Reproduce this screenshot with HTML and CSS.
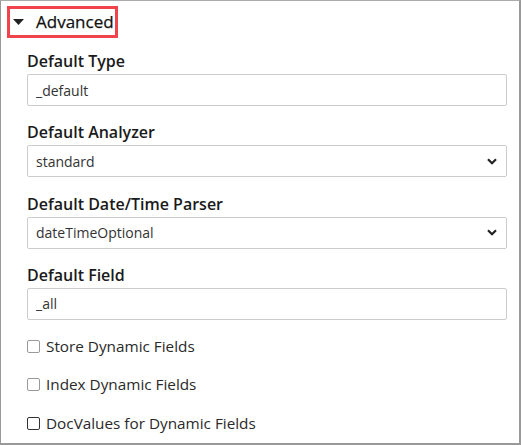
FILE: index.html
```html
<!DOCTYPE html>
<html>
<head>
<meta charset="utf-8">
<link rel="stylesheet" href="styles.css">
</head>
<body>
<div class="panel">
  <div class="header">
    <span class="toggle"><svg class="caret" width="11" height="6" viewBox="0 0 11 6"><path d="M0 0h11L5.5 6z" fill="#222"/></svg>Advanced</span>
  </div>
  <div class="fields">
    <div class="field">
      <label class="label">Default Type</label>
      <input class="control" type="text" value="_default">
    </div>
    <div class="field">
      <label class="label">Default Analyzer</label>
      <div class="select"><span>standard</span><svg class="chev" width="10" height="7" viewBox="0 0 10 7"><path d="M1 1.2l4 4 4-4" fill="none" stroke="#222" stroke-width="2.2"/></svg></div>
    </div>
    <div class="field">
      <label class="label">Default Date/Time Parser</label>
      <div class="select"><span>dateTimeOptional</span><svg class="chev" width="10" height="7" viewBox="0 0 10 7"><path d="M1 1.2l4 4 4-4" fill="none" stroke="#222" stroke-width="2.2"/></svg></div>
    </div>
    <div class="field">
      <label class="label">Default Field</label>
      <input class="control" type="text" value="_all">
    </div>
    <div class="checks">
      <label class="check"><span class="box"></span>Store Dynamic Fields</label>
      <label class="check"><span class="box"></span>Index Dynamic Fields</label>
      <label class="check"><span class="box dark"></span>DocValues for Dynamic Fields</label>
    </div>
  </div>
</div>
</body>
</html>
```

FILE: styles.css
```css
* { box-sizing: border-box; }
html, body { margin: 0; padding: 0; background: #fff; }
body { font-family: "Open Sans", sans-serif; color: #222; }
.panel {
  width: 521px;
  height: 445px;
  border-left: 1px solid #999;
  border-top: 1px solid #aaa;
  border-right: 2px solid #999;
  border-bottom: 2px solid #999;
  padding: 4px 12px 0 6px;
}
.header { height: 33px; display: flex; align-items: center; }
.toggle {
  display: flex;
  align-items: center;
  width: 111px;
  height: 32px;
  border: 3px solid #f0434b;
  padding: 0 0 0 3px;
  font-size: 17px;
  font-weight: 500;
  color: #111;
  -webkit-text-stroke: 0.25px #111;
}
.caret { margin-right: 12px; margin-top: 1px; }
.fields { padding-left: 20px; }
.field { display: flex; flex-direction: column; margin-top: 12px; }
.field + .field { margin-top: 15.3px; }
.label { font-size: 16px; font-weight: 600; line-height: 22px; margin-bottom: 2px; color: #1a1a1a; }
.control, .select {
  width: 480px;
  height: 32px;
  border: 1px solid #ccc;
  border-radius: 2px;
  font-family: "Open Sans", sans-serif;
  font-size: 14px;
  color: #333;
  padding: 0 8px;
  background: #fff;
  outline: none;
}
.select { display: flex; align-items: center; justify-content: space-between; }
.chev { margin-right: 1px; }
.checks { display: flex; flex-direction: column; margin-top: 16px; gap: 17.5px; }
.check { display: flex; align-items: center; font-size: 15.3px; color: #2a2a2a; line-height: 21px; }
.box {
  width: 13px; height: 13px;
  border: 1px solid #999;
  border-radius: 2px;
  margin-right: 6px;
  background: #fff;
}
.box.dark { border-color: #333; }
```
